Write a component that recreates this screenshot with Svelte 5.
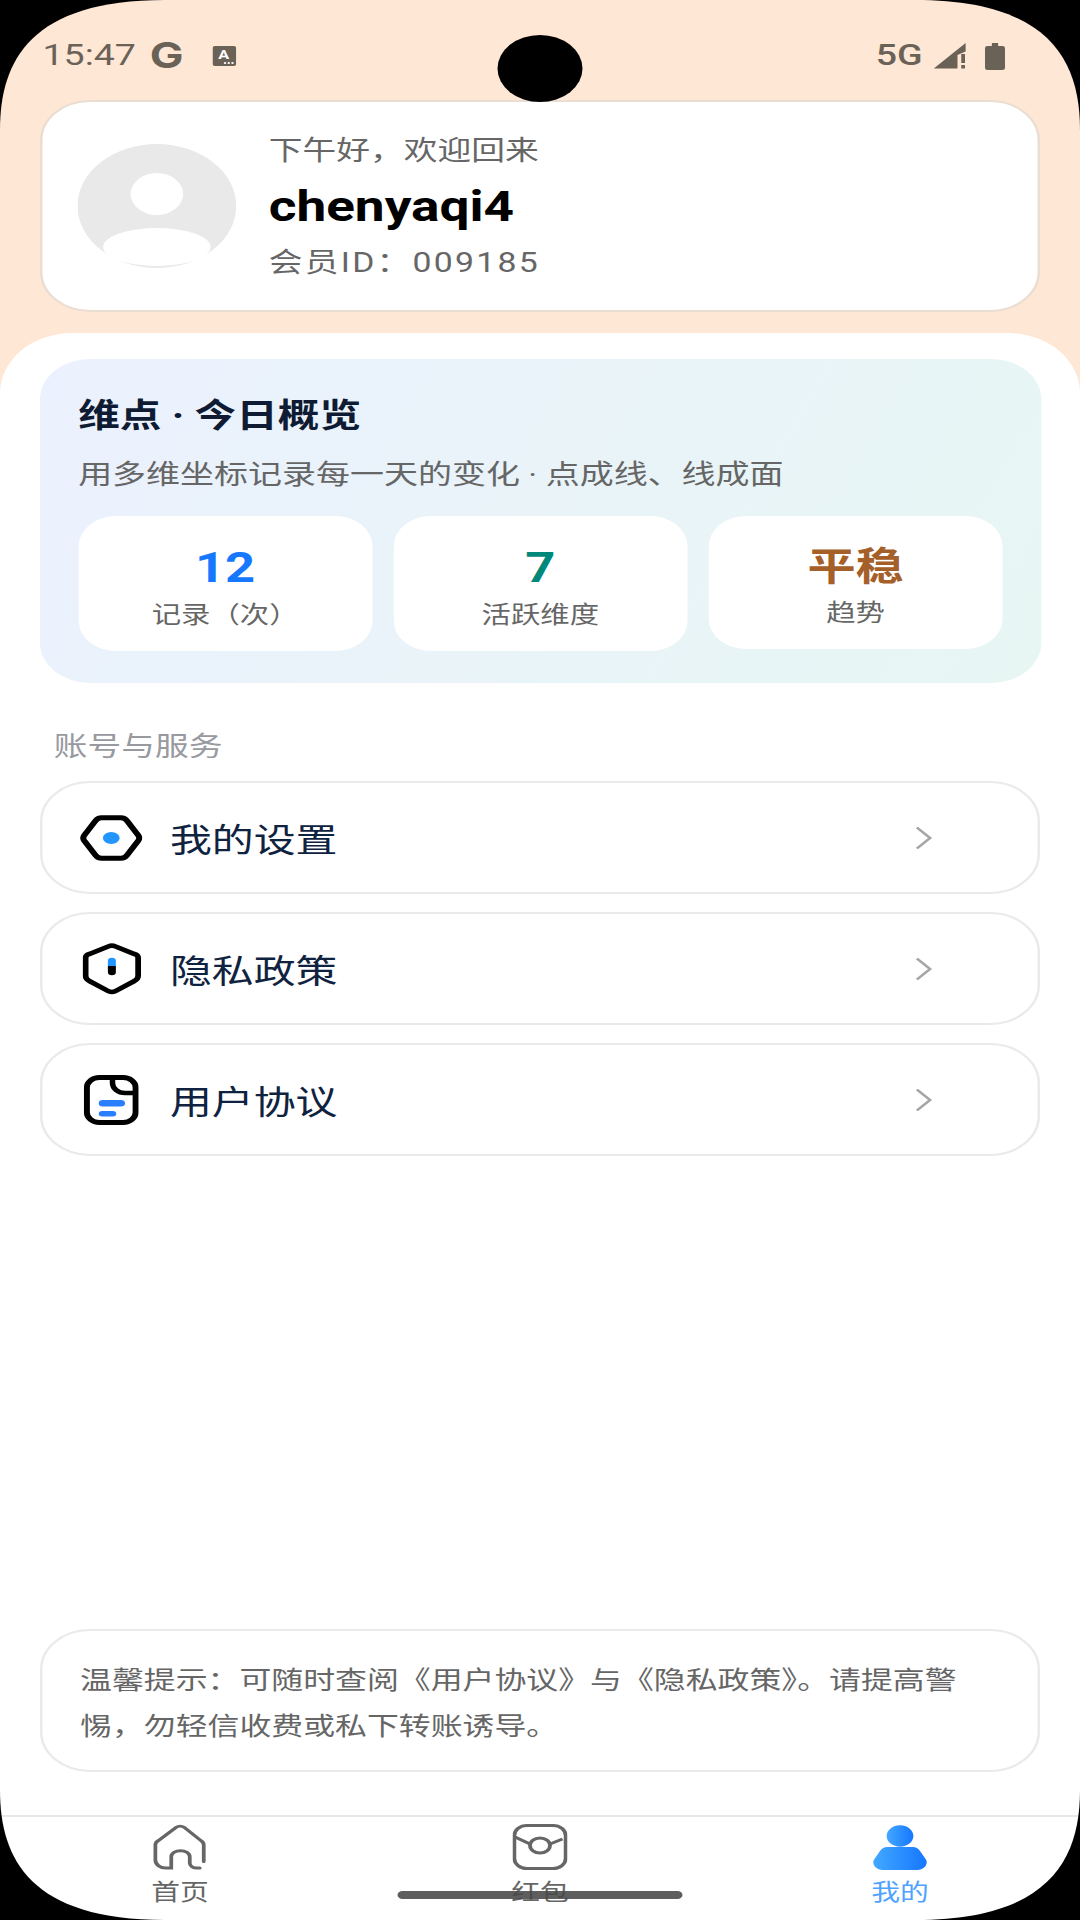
<script>
	const stats = [
		{ value: '12', label: '记录（次）', tone: 'blue' },
		{ value: '7', label: '活跃维度', tone: 'teal' },
		{ value: '平稳', label: '趋势', tone: 'brown' }
	];
	const rows = [
		{ id: 'settings', label: '我的设置' },
		{ id: 'privacy', label: '隐私政策' },
		{ id: 'terms', label: '用户协议' }
	];
</script>

<div class="screen">
	<div class="status">
		<div class="status-left">
			<span class="time">15:47</span>
			<span class="g">G</span>
			<svg class="a-icon" width="19" height="20" viewBox="0 0 19 20">
				<rect width="19" height="20" rx="2" fill="#6b6257" />
				<text x="9" y="13" text-anchor="middle" font-size="13" font-weight="700" font-family="Roboto, sans-serif" fill="#fff">A</text>
				<circle cx="10" cy="17" r="1" fill="#fff" /><circle cx="13" cy="17" r="1" fill="#fff" /><circle cx="16" cy="17" r="1" fill="#fff" />
			</svg>
		</div>
		<div class="status-right">
			<span class="net">5G</span>
			<svg width="26" height="26" viewBox="0 0 26 26">
				<path d="M0 25.5 25.5 0v8.5L19 12v13.5z" fill="#6b6257" />
				<rect x="22" y="11" width="3" height="9" fill="#6b6257" /><rect x="22" y="22" width="3" height="3.5" fill="#6b6257" />
			</svg>
			<svg class="battery" width="16" height="27" viewBox="0 0 16 27">
				<path d="M5.5 0h5v3H14a2 2 0 0 1 2 2v20a2 2 0 0 1-2 2H2a2 2 0 0 1-2-2V5a2 2 0 0 1 2-2h3.5z" fill="#6b6257" />
			</svg>
		</div>
	</div>

	<header class="profile">
		<svg class="avatar" width="127" height="124" viewBox="0 0 127 124">
			<ellipse cx="63.500" cy="62" rx="63.500" ry="62" fill="#e9e9e9" />
			<circle cx="63.500" cy="50" r="21" fill="#fff" />
			<ellipse cx="63.500" cy="103" rx="43" ry="19" fill="#fff" />
		</svg>
		<div class="who">
			<div class="greet">下午好，欢迎回来</div>
			<div class="name">chenyaqi4</div>
			<div class="member">会员ID：009185</div>
		</div>
	</header>

	<main class="sheet">
		<section class="overview">
			<h2>维点 · 今日概览</h2>
			<p>用多维坐标记录每一天的变化 · 点成线、线成面</p>
			<div class="stats">
				{#each stats as s}
					<div class="stat {s.tone}">
						<div class="value">{s.value}</div>
						<div class="label">{s.label}</div>
					</div>
				{/each}
			</div>
		</section>

		<div class="section-title">账号与服务</div>

		<div class="rows">
			{#each rows as r}
				<div class="row">
					<span class="row-icon">
						{#if r.id === 'settings'}
							<svg width="50" height="46" viewBox="0 0 52 46" preserveAspectRatio="none">
								<path d="M18 2.800h16a6 6 0 0 1 5 2.800l9.500 14.800a5 5 0 0 1 0 5.200L39 40.400a6 6 0 0 1-5 2.800H18a6 6 0 0 1-5-2.800L3.500 25.600a5 5 0 0 1 0-5.200L13 5.600a6 6 0 0 1 5-2.800z" fill="none" stroke="#000" stroke-width="5" />
								<ellipse cx="26" cy="23" rx="7" ry="6" fill="#2196ff" />
							</svg>
						{:else if r.id === 'privacy'}
							<svg width="47" height="52" viewBox="0 0 47 52">
								<path d="M21 3.300a5 5 0 0 1 5 0l15.500 7.700a4 4 0 0 1 3 3.500V33a6 6 0 0 1-3 5L26 48.300a5 5 0 0 1-5 0L5.500 38a6 6 0 0 1-3-5V14.500a4 4 0 0 1 3-3.500z" fill="none" stroke="#000" stroke-width="4.600" />
								<path d="M20.300 23v-5a3.200 3.200 0 0 1 6.400 0v5z" fill="#2196ff" />
								<path d="M20.300 23h6.400v6a3.200 3.200 0 0 1-6.400 0z" fill="#000" />
							</svg>
						{:else}
							<svg width="44" height="50" viewBox="0 0 44 50">
								<rect x="2.500" y="2.500" width="39" height="45" rx="10" fill="none" stroke="#000" stroke-width="4.800" />
								<path d="M23 4v4a10 10 0 0 0 10 10h7" fill="none" stroke="#000" stroke-width="4.400" />
								<rect x="12" y="25" width="21" height="6.500" rx="3.200" fill="#2a7fff" />
								<rect x="12" y="36" width="14" height="5.500" rx="2.700" fill="#2a7fff" />
							</svg>
						{/if}
					</span>
					<span class="row-label">{r.label}</span>
					<svg class="chev" width="14" height="24" viewBox="0 0 14 24">
						<path d="M1.500 1.500 12 12 1.500 22.500" fill="none" stroke="#a6a6a6" stroke-width="2.400" />
					</svg>
				</div>
			{/each}
		</div>

		<div class="notice">温馨提示：可随时查阅《用户协议》与《隐私政策》。请提高警惕，勿轻信收费或私下转账诱导。</div>

		<nav class="tabs">
			<div class="tab">
				<svg width="44" height="46" viewBox="0 0 44 46">
					<path d="M41 37.500V21a5 5 0 0 0-1.900-4L25.300 3.300a5 5 0 0 0-6.400 0L4.200 17a5 5 0 0 0-1.900 4v15a8 8 0 0 0 8 8h4.700V32.700a7.400 6 0 0 1 14.800 0V39a5 5 0 0 0 5 5h3" fill="none" stroke="#666" stroke-width="3" stroke-linecap="round" />
				</svg>
				<span>首页</span>
			</div>
			<div class="tab">
				<svg width="44" height="46" viewBox="0 0 44 46">
					<rect x="1.500" y="1.500" width="41" height="43" rx="10" fill="none" stroke="#666" stroke-width="3" />
					<ellipse cx="22" cy="21.500" rx="8" ry="7.500" fill="none" stroke="#666" stroke-width="3" />
					<path d="M2 13l12 7M30 20l10-5" fill="none" stroke="#666" stroke-width="3" />
				</svg>
				<span>红包</span>
			</div>
			<div class="tab active">
				<svg width="44" height="46" viewBox="0 0 44 46">
					<defs>
						<linearGradient id="meBody" x1="0" x2="1" y1="0" y2="0">
							<stop offset="0" stop-color="#42a8ff" />
							<stop offset="1" stop-color="#1677ff" />
						</linearGradient>
					</defs>
					<ellipse cx="22" cy="12" rx="10.700" ry="10.700" fill="url(#meBody)" />
					<path d="M12 23H32C35 23 37 25 38 27L43 36C44.500 41 41 46 36 46H8C3 46-.5 41 1 36L6 27C7 25 9 23 12 23Z" fill="url(#meBody)" />
				</svg>
				<span>我的</span>
			</div>
		</nav>
	</main>

	<div class="camera"></div>
	<div class="home-bar"></div>
</div>

<style>
	:global(body) {
		background: #000;
		overflow: hidden;
	}

	/* the reference is stretched sideways: lay out at 864 wide and widen the lot */
	.screen {
		position: relative;
		display: flex;
		flex-direction: column;
		width: 864px;
		height: 1920px;
		overflow: hidden;
		background: #ffe7d6;
		clip-path: path('M0 130C0 60 25 0 132 0H732C839 0 864 60 864 130V1790C864 1860 839 1920 732 1920H132C25 1920 0 1860 0 1790Z');
		font-family: Roboto, 'Noto Sans CJK SC', sans-serif;
		transform: scaleX(1.25);
		transform-origin: 0 0;
	}

	.status {
		display: flex;
		justify-content: space-between;
		height: 100px;
		box-sizing: border-box;
		padding: 39px 60px 0 34px;
		color: #6b6257;
		flex: none;
	}

	.status-left,
	.status-right {
		display: flex;
		align-items: flex-start;
	}

	.time {
		font-size: 30px;
		line-height: 32px;
	}

	.g {
		margin-left: 11px;
		font-family: Inter, sans-serif;
		font-size: 36px;
		font-weight: 700;
		line-height: 32px;
	}

	.a-icon {
		margin: 7px 0 0 23px;
	}

	.net {
		font-size: 30px;
		font-weight: 500;
		line-height: 32px;
	}

	.status-right svg {
		margin: 4px 0 0 9px;
	}

	.status-right .battery {
		margin-left: 15px;
	}

	.profile {
		display: flex;
		align-items: center;
		gap: 26px;
		height: 212px;
		box-sizing: border-box;
		margin: 0 32px;
		padding: 0 28px;
		background: #fff;
		border: 2px solid #eaddd2;
		border-radius: 40px;
		flex: none;
	}

	.who > div {
		line-height: 55px;
	}

	.greet,
	.member {
		font-size: 27px;
		color: #666;
	}

	.name {
		font-size: 42.500px;
		font-weight: 700;
		color: #000;
	}

	.member {
		position: relative;
		top: 2px;
		letter-spacing: 1.800px;
	}

	.sheet {
		display: flex;
		flex-direction: column;
		flex: 1;
		margin-top: 21px;
		padding-top: 26px;
		background: #fff;
		border-radius: 58px 58px 0 0 / 60px 60px 0 0;
	}

	.overview {
		height: 324px;
		box-sizing: border-box;
		margin: 0 31px 0 31.500px;
		padding: 34px 31px 0;
		background: linear-gradient(115deg, #ebf1fe, #e7f6f3);
		border-radius: 40px;
	}

	h2 {
		margin: 0;
		font-size: 33.300px;
		line-height: 46px;
		font-weight: 700;
		color: #0f1b33;
	}

	.overview p {
		margin: 16px 0 0;
		font-size: 27.200px;
		line-height: 40px;
		color: #666;
	}

	.stats {
		display: grid;
		grid-template-columns: repeat(3, 1fr);
		gap: 17px;
		align-items: start;
		margin-top: 21px;
	}

	.stat {
		padding: 28px 0 20px;
		text-align: center;
		background: #fff;
		border-radius: 30px;
	}

	.value {
		font-size: 42px;
		line-height: 48px;
		font-weight: 700;
	}

	.label {
		margin-top: 8px;
		font-size: 23.500px;
		line-height: 31px;
		color: #666;
	}

	.blue .value {
		color: #1677ff;
	}

	.teal .value {
		color: #00897b;
	}

	.brown .value {
		font-size: 38.500px;
		line-height: 45px;
		color: #a5602a;
	}

	.brown .label {
		margin-top: 9px;
	}

	.section-title {
		margin: 46px 0 16px 43px;
		font-size: 27px;
		line-height: 36px;
		color: #999aa0;
	}

	.rows {
		display: flex;
		flex-direction: column;
		gap: 18px;
		margin: 0 32px;
	}

	.row {
		display: flex;
		align-items: center;
		height: 113px;
		box-sizing: border-box;
		padding: 0 84px 0 29px;
		background: #fff;
		border: 2px solid #eaeaea;
		border-radius: 40px;
	}

	.row-icon {
		display: flex;
		justify-content: center;
		width: 52px;
	}

	.row-label {
		margin-left: 21px;
		font-size: 33.500px;
		color: #0f2340;
	}

	.chev {
		margin-left: auto;
	}

	.notice {
		height: 143px;
		box-sizing: border-box;
		margin: auto 32px 43px;
		padding: 26px 30px 0;
		font-size: 25.500px;
		line-height: 46px;
		color: #666;
		background: #fff;
		border: 2px solid #eaeaea;
		border-radius: 40px;
	}

	.tabs {
		display: grid;
		grid-template-columns: repeat(3, 1fr);
		height: 105px;
		box-sizing: border-box;
		padding-top: 7px;
		border-top: 2px solid #e8e8e8;
		flex: none;
	}

	.tab {
		display: flex;
		flex-direction: column;
		align-items: center;
		font-size: 23px;
		line-height: 32px;
		color: #666;
	}

	.tab span {
		margin-top: 7px;
	}

	.tab.active {
		color: #4da3ff;
	}

	.camera {
		position: absolute;
		top: 35px;
		left: 398px;
		width: 68px;
		height: 67px;
		background: #000;
		border-radius: 50%;
	}

	.home-bar {
		position: absolute;
		left: 318px;
		bottom: 21px;
		width: 228px;
		height: 8px;
		background: rgba(72, 72, 72, 0.88);
		border-radius: 4px;
	}
</style>
